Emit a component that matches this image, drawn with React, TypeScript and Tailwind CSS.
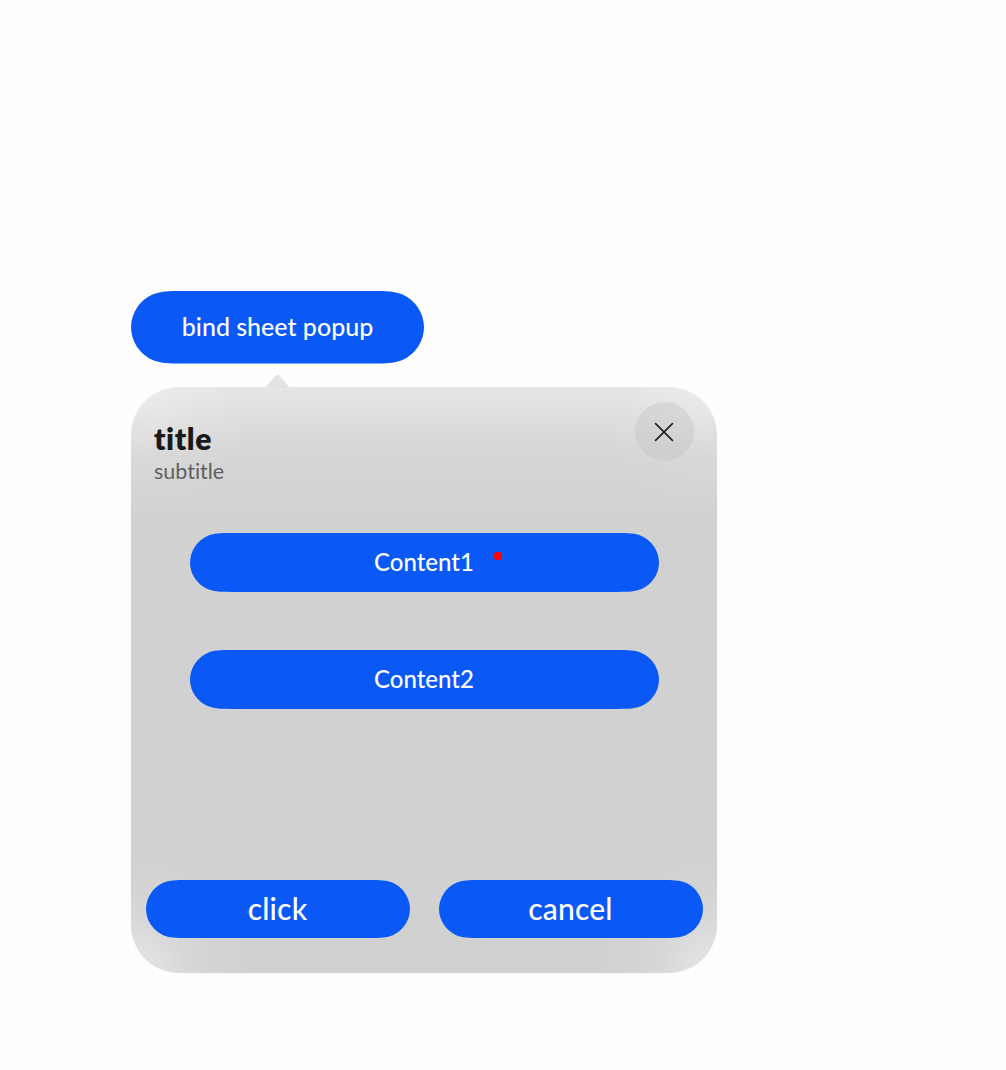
import type { ReactNode } from "react";

type PillProps = { width: number; height: number; className: string; children: ReactNode };

// Pill outline whose round ends ease gradually into the straight edges.
function smoothPill(w: number, h: number) {
  const r = h / 2;
  const p = (x: number, y: number) => `${(x * r).toFixed(2)} ${(y * r).toFixed(2)}`;
  const q = (x: number, y: number) => `${(w - x * r).toFixed(2)} ${(y * r).toFixed(2)}`;
  const a = `A${r} ${r} 0 0 1`;
  return `path("M${p(1.4, 0)}L${q(1.4, 0)}C${q(1.05, 0)} ${q(0.79, 0.012)} ${q(0.593, 0.0975)}${a} ${q(0, 1)}${a} ${q(0.593, 1.9025)}C${q(0.79, 1.988)} ${q(1.05, 2)} ${q(1.4, 2)}L${p(1.4, 2)}C${p(1.05, 2)} ${p(0.79, 1.988)} ${p(0.593, 1.9025)}${a} ${p(0, 1)}${a} ${p(0.593, 0.0975)}C${p(0.79, 0.012)} ${p(1.05, 0)} ${p(1.4, 0)}Z")`;
}

function PillButton({ width, height, className, children }: PillProps) {
  return (
    <button
      type="button"
      className={`flex items-center justify-center bg-[#0a59f7] font-medium text-white ${className}`}
      style={{ width, height, clipPath: smoothPill(width, height) }}
    >
      {children}
    </button>
  );
}

export default function App() {
  return (
    <main className="h-[1070px] w-[1006px] overflow-hidden bg-[#fefefe] pt-[291px] pl-[131px] font-['Lato','Noto_Sans',sans-serif] [font-variant-ligatures:none]">
      <PillButton width={293} height={72.5} className="pb-[2px] text-[25px]">
        <span>bind sheet popup</span>
      </PillButton>

      <div className="relative mt-[23.5px] h-[586px] w-[586px]">
        <svg className="absolute -top-[13px] left-[134px]" width="25" height="14" viewBox="0 0 25 14" fill="#e3e3e3">
          <path d="M0 14 10.3 2Q12.5 -.6 14.7 2L25 14Z" />
        </svg>

        <section
          className="flex h-full w-full flex-col overflow-hidden rounded-[48px] bg-[#d1d1d1] px-[15px]"
          style={{
            backgroundImage:
              "radial-gradient(circle at 0 0, rgba(255,255,255,.35), rgba(255,255,255,.08) 75px, transparent 130px), radial-gradient(circle at 100% 0, rgba(255,255,255,.3), rgba(255,255,255,.06) 75px, transparent 130px), radial-gradient(circle at 0 100%, rgba(255,255,255,.54), rgba(255,255,255,.14) 55px, rgba(255,255,255,.04) 90px, transparent 130px), radial-gradient(circle at 100% 100%, rgba(255,255,255,.54), rgba(255,255,255,.14) 55px, rgba(255,255,255,.04) 90px, transparent 130px), linear-gradient(to bottom, #e6e6e6 0, #dddddd 35px, #d6d6d6 65px, #d1d1d1 140px)",
          }}
        >
          <header className="flex h-[146px] shrink-0 items-start justify-between pt-[15px] pr-[8px] pl-[8px]">
            <div className="pt-[18px]">
              <h1 className="text-[30px] leading-[36px] font-extrabold tracking-[0.6px] text-[#191919]">title</h1>
              <p className="pt-px text-[21.5px] leading-[28px] text-[#5f5f5f]">subtitle</p>
            </div>
            <button type="button" aria-label="Close" className="flex h-[59px] w-[59px] items-center justify-center rounded-full bg-[#c2c2c2]/40">
              <svg className="mt-px -ml-px" width="20" height="20" viewBox="0 0 20 20" fill="none" stroke="#222" strokeWidth="1.7" strokeLinecap="round">
                <path d="M1.6 1.6 18.4 18.4M18.4 1.6 1.6 18.4" />
              </svg>
            </button>
          </header>

          <div className="flex flex-col items-start gap-[58px] pl-[44px]">
            <PillButton width={469} height={59} className="relative pr-[1px] pb-[2px] text-[24px]">
              <span>Content1</span>
              <i className="absolute top-[19px] left-[304px] h-[8px] w-[8px] rounded-[3px] bg-[#ff0000]" />
            </PillButton>
            <PillButton width={469} height={59} className="pr-[1px] pb-[2px] text-[24px]">
              <span>Content2</span>
            </PillButton>
          </div>

          <footer className="mt-auto mb-[35px] -mr-px flex justify-between">
            <PillButton width={264} height={58} className="pr-px pb-[2px] text-[30px] tracking-[0.2px]">
              <span>click</span>
            </PillButton>
            <PillButton width={264} height={58} className="pr-px pb-[2px] text-[30px] tracking-[0.2px]">
              <span>cancel</span>
            </PillButton>
          </footer>
        </section>
      </div>
    </main>
  );
}
